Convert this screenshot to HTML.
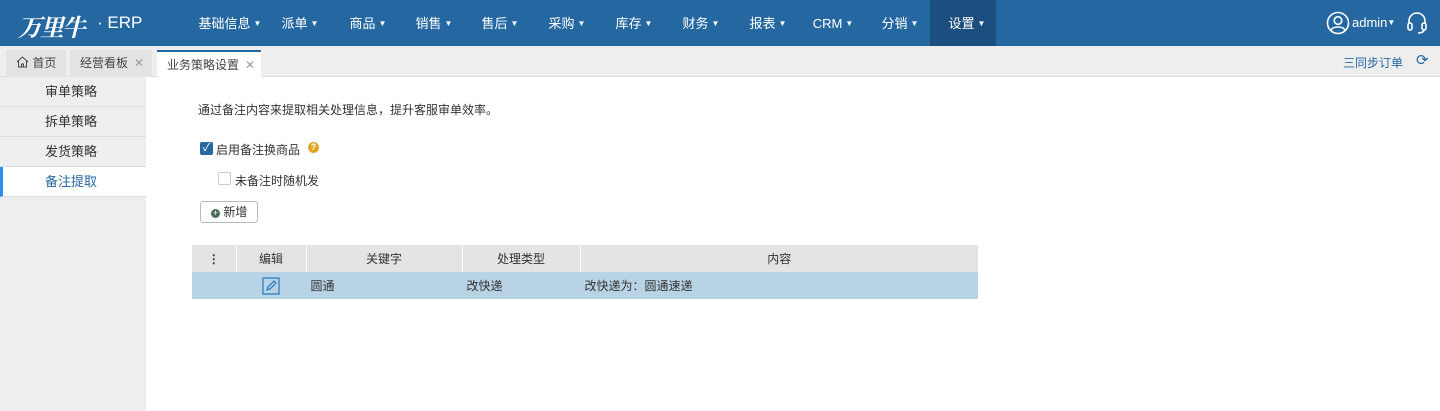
<!DOCTYPE html><html><head><meta charset="utf-8"><style>
*{margin:0;padding:0;box-sizing:border-box}
body{width:1440px;height:411px;overflow:hidden;background:#fff;font-family:"Liberation Sans","Noto Sans CJK SC",sans-serif;font-size:12px;color:#333;position:relative}
.hd{position:absolute;left:0;top:0;width:1440px;height:46px;background:#2567a1}
.nav{position:absolute;top:0;height:46px;line-height:48px;color:#fff;font-size:13px;transform:translateX(-50%);white-space:nowrap}
.nav i{font-style:normal;font-size:8px;margin-left:3px;vertical-align:2px}
.act{position:absolute;left:930px;top:0;width:66px;height:46px;background:#1c4f7f}
.tabs{position:absolute;top:46px;left:0;width:1440px;height:31px;background:#eeeeee;border-bottom:1px solid #ddd}
.tab{position:absolute;top:4px;height:27px;line-height:27px;background:#e3e3e3;padding:0 0 0 10px;color:#444;white-space:nowrap}
.side{position:absolute;left:0;top:77px;width:146px;height:334px;background:#eeeeee}
.si{height:30px;line-height:30px;padding-left:45px;border-bottom:1px solid #ddd;color:#333;font-size:13px}
.abs{position:absolute;white-space:nowrap}
table{border-collapse:collapse;position:absolute;left:192px;top:245px;width:787px}
td{height:27px;text-align:center;border-right:1px solid #fff;font-size:12px}
</style></head><body>
<div class="hd"></div>
<div class="act"></div>
<div class="abs" style="left:18px;top:8px;color:#fff;font:italic bold 24px 'Liberation Serif','Noto Serif CJK SC',serif;letter-spacing:-2px">万里牛</div>
<div class="abs" style="left:97px;top:13px;color:#fff;font-size:17px">· ERP</div>
<div class="nav" style="left:230px">基础信息<i>▼</i></div>
<div class="nav" style="left:300px">派单<i>▼</i></div>
<div class="nav" style="left:368px">商品<i>▼</i></div>
<div class="nav" style="left:434px">销售<i>▼</i></div>
<div class="nav" style="left:500px">售后<i>▼</i></div>
<div class="nav" style="left:567px">采购<i>▼</i></div>
<div class="nav" style="left:634px">库存<i>▼</i></div>
<div class="nav" style="left:701px">财务<i>▼</i></div>
<div class="nav" style="left:768px">报表<i>▼</i></div>
<div class="nav" style="left:833px">CRM<i>▼</i></div>
<div class="nav" style="left:900px">分销<i>▼</i></div>
<div class="nav" style="left:967px">设置<i>▼</i></div>
<svg class="abs" style="left:1326px;top:11px" width="24" height="24" viewBox="0 0 24 24" fill="none" stroke="#fff" stroke-width="1.6"><circle cx="12" cy="12" r="10.5"/><circle cx="12" cy="9.5" r="3.8"/><path d="M5 19c2-4 12-4 14 0"/></svg>
<div class="abs" style="left:1352px;top:15px;color:#fff;font-size:13px">admin<span style="font-size:8px;vertical-align:2px">▼</span></div>
<svg class="abs" style="left:1406px;top:11px" width="22" height="24" viewBox="0 0 22 24" fill="none" stroke="#fff" stroke-width="1.6"><path d="M3 13V10a8 8 0 0116 0v3"/><rect x="2" y="12" width="4" height="7" rx="2"/><rect x="16" y="12" width="4" height="7" rx="2"/><path d="M18 19c0 2-3 3-6 3"/></svg>
<div class="tabs">
<div class="tab" style="left:6px;width:60px"><svg width="13" height="12" viewBox="0 0 13 12" style="vertical-align:-1px" fill="none" stroke="#444"><path d="M1 6L6.5 1 12 6M2.5 5v6h8V5M5.5 11V8h2v3"/></svg> 首页</div>
<div class="tab" style="left:70px;width:82px">经营看板<span style="color:#999;margin-left:6px">✕</span></div>
<div class="tab" style="left:157px;width:104px;background:#fff;border-top:2px solid #2567a1;height:28px">业务策略设置<span style="color:#999;margin-left:6px">✕</span></div>
<div class="abs" style="left:1343px;top:8px;color:#2567a1">三同步订单</div>
<div class="abs" style="left:1416px;top:5px;color:#2567a1;font-size:15px">⟳</div>
</div>
<div class="side">
<div class="si">审单策略</div><div class="si">拆单策略</div><div class="si">发货策略</div>
<div class="si" style="background:#fff;color:#2567a1;border-left:3px solid #2e8ded;padding-left:42px">备注提取</div>
</div>
<div class="abs" style="left:198px;top:101px">通过备注内容来提取相关处理信息，提升客服审单效率。</div>
<div class="abs" style="left:200px;top:142px;width:13px;height:13px;background:#2567a1;border-radius:2px;color:#fff;font-size:11px;line-height:13px;text-align:center">✓</div>
<div class="abs" style="left:216px;top:141px">启用备注换商品</div>
<div class="abs" style="left:308px;top:142px;width:11px;height:11px;border-radius:50%;background:#e0a526;color:#fff;font-size:9px;line-height:11px;text-align:center;font-weight:bold">?</div>
<div class="abs" style="left:218px;top:172px;width:13px;height:13px;border:1px solid #ccc;border-radius:2px"></div>
<div class="abs" style="left:235px;top:172px">未备注时随机发</div>
<div class="abs" style="left:200px;top:201px;width:58px;height:22px;border:1px solid #bbb;border-radius:3px;line-height:20px;padding-left:10px"><span style="display:inline-block;width:9px;height:9px;border-radius:50%;background:#4a6b55;color:#fff;font-size:9px;line-height:9px;text-align:center;vertical-align:0">+</span> 新增</div>
<table>
<tr style="background:#e4e4e4"><td style="width:44px;font-weight:bold">⋮</td><td style="width:70px">编辑</td><td style="width:156px">关键字</td><td style="width:118px">处理类型</td><td>内容</td></tr>
<tr style="background:#b9d3e6"><td style="border-right-color:#b9d3e6"></td><td style="border-right-color:#b9d3e6"><svg width="18" height="18" viewBox="0 0 18 18" fill="none" stroke="#2e7fc0" stroke-width="1.3" style="vertical-align:middle"><rect x="1" y="1" width="16" height="16"/><path d="M5 13l1-3 6-6 2 2-6 6z"/></svg></td><td style="text-align:left;padding-left:4px;border-right-color:#b9d3e6">圆通</td><td style="text-align:left;padding-left:4px;border-right-color:#b9d3e6">改快递</td><td style="text-align:left;padding-left:4px">改快递为：圆通速递</td></tr>
</table>
</body></html>
